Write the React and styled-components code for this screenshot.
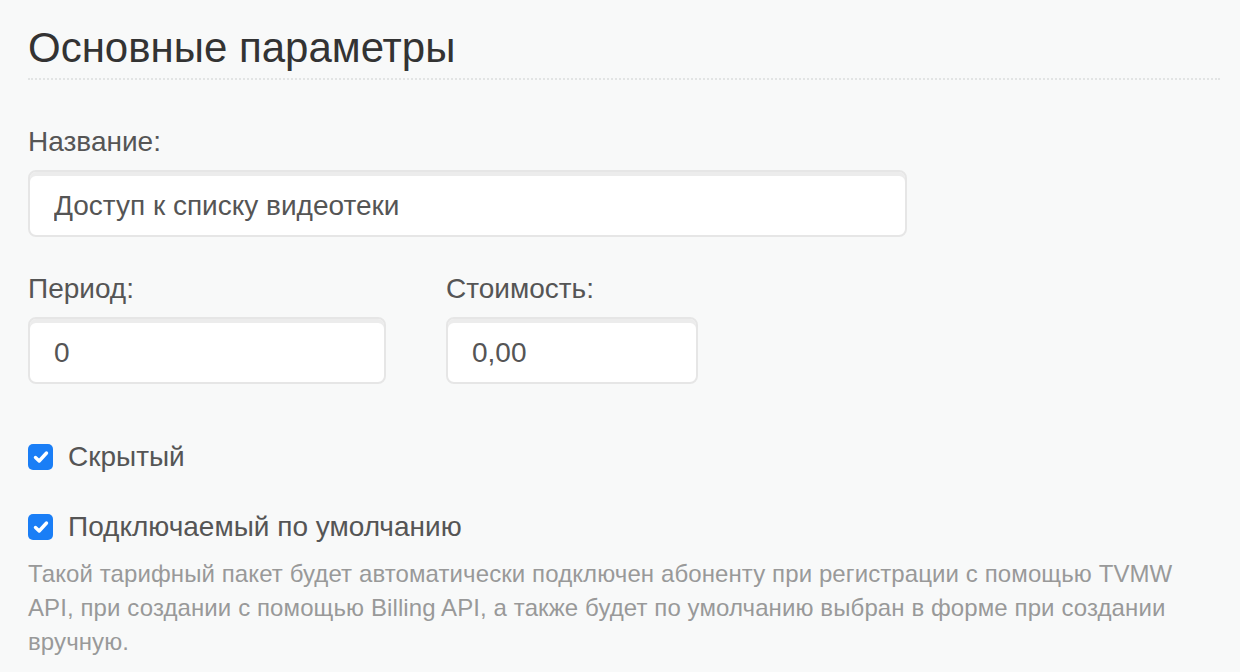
import React from "react";
import styled, { createGlobalStyle } from "styled-components";

const Global = createGlobalStyle`
  html, body { margin: 0; padding: 0; background: #f8f9f9; }
  body { font-family: "Liberation Sans", Arial, sans-serif; }
  * { box-sizing: border-box; }
`;

const Page = styled.div`
  width: 1240px;
  height: 672px;
  overflow: hidden;
  padding: 0 20px 0 28px;
  background: #f8f9f9;
`;

const Heading = styled.h2`
  margin: 0;
  padding-top: 24px;
  padding-bottom: 6px;
  font-size: 42px;
  font-weight: 400;
  line-height: 48px;
  color: #333;
  border-bottom: 2px dotted #e2e4e4;
`;

const Field = styled.div`
  display: flex;
  flex-direction: column;
  width: ${(p) => p.$width}px;
`;

const Label = styled.label`
  font-size: 28px;
  line-height: 32px;
  color: #555;
  margin-bottom: 12px;
`;

const Input = styled.input`
  width: 100%;
  height: 67px;
  padding: 4px 24px 0;
  font-family: "Liberation Sans", Arial, sans-serif;
  font-size: 28px;
  color: #555;
  background: #fff;
  border: 2px solid #e6e6e6;
  border-radius: 8px;
  box-shadow: inset 0 4px 0 #ececec;
  outline: none;
`;

const Row = styled.div`
  display: flex;
  gap: 60px;
  margin-top: ${(p) => p.$top}px;
`;

const CheckRow = styled.label`
  display: flex;
  align-items: center;
  gap: 15px;
  margin-top: ${(p) => p.$top}px;
  font-size: 28px;
  line-height: 32px;
  color: #555;
`;

const Box = styled.span`
  width: 25px;
  height: 26px;
  border-radius: 5px;
  background: #1a7ef6;
  display: flex;
  align-items: center;
  justify-content: center;
  flex-shrink: 0;
`;

const Help = styled.p`
  margin: 14px 0 0;
  font-size: 24px;
  line-height: 34px;
  letter-spacing: 0.1px;
  color: #999;
  max-width: 1180px;
`;

function Check() {
  return (
    <Box>
      <svg width="16" height="14" viewBox="0 0 16 14">
        <path d="M2.5 7.5 L6.2 11 L13.5 3" fill="none" stroke="#fff" strokeWidth="3.4" strokeLinecap="round" strokeLinejoin="round" />
      </svg>
    </Box>
  );
}

export default function App() {
  return (
    <Page>
      <Global />
      <Heading>Основные параметры</Heading>
      <Row $top={46}>
        <Field $width={879}>
          <Label>Название:</Label>
          <Input defaultValue="Доступ к списку видеотеки" />
        </Field>
      </Row>
      <Row $top={36}>
        <Field $width={358}>
          <Label>Период:</Label>
          <Input defaultValue="0" />
        </Field>
        <Field $width={252}>
          <Label>Стоимость:</Label>
          <Input defaultValue="0,00" />
        </Field>
      </Row>
      <CheckRow $top={57}>
        <Check />
        Скрытый
      </CheckRow>
      <CheckRow $top={38}>
        <Check />
        Подключаемый по умолчанию
      </CheckRow>
      <Help>
        Такой тарифный пакет будет автоматически подключен абоненту при регистрации с помощью TVMW API, при создании с помощью Billing API, а также будет по умолчанию выбран в форме при создании вручную.
      </Help>
    </Page>
  );
}
